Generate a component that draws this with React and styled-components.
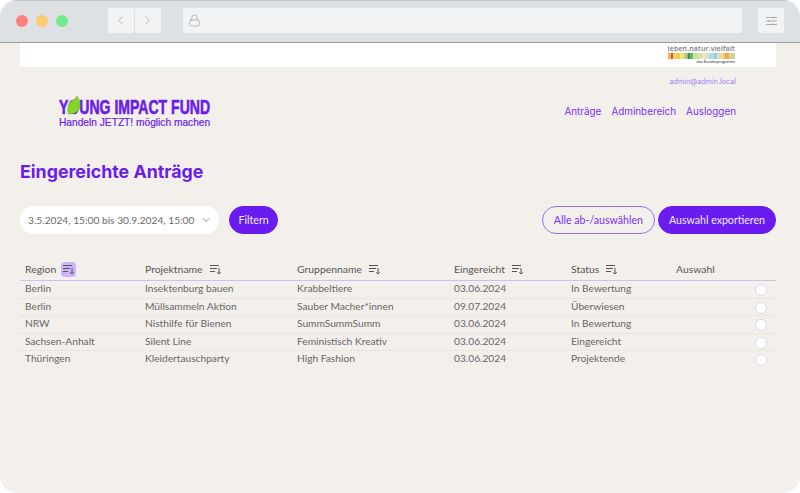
import React from 'react'
import styled, { createGlobalStyle } from 'styled-components'
import { ChevronDown, ChevronLeft, ChevronRight, Lock } from 'lucide-react'

const GlobalStyle = createGlobalStyle`
  html, body { margin: 0; padding: 0; background: #fff; }
  * { box-sizing: border-box; }
`

const Browser = styled.div`
  width: 800px;
  height: 493px;
  background: #f3f0ec;
  border-radius: 17px;
  overflow: hidden;
  font-family: "Lato", sans-serif;
`

const Chrome = styled.div`
  height: 43px;
  background: #dee1e4;
  border-top: 1px solid #c6c8cc;
  border-bottom: 1px solid #9a9a9c;
  display: flex;
  align-items: center;
  padding: 0 15px 2px 16px;
`

const Lights = styled.div`
  display: flex;
  gap: 8px;
  margin-right: 40px;
`

const Light = styled.span`
  width: 12px;
  height: 12px;
  border-radius: 50%;
  background: ${(p) => p.$color};
`

const ToolButton = styled.div`
  width: 26px;
  height: 25px;
  margin-right: 1px;
  background: #f2f3f5;
  border-radius: 2px;
  color: #a9abae;
  display: flex;
  align-items: center;
  justify-content: center;
`

const AddressBar = styled.div`
  width: 560px;
  height: 25px;
  margin: 0 16px 0 21px;
  background: #f2f3f5;
  border-radius: 2px;
  color: #a9abae;
  display: flex;
  align-items: center;
  padding-left: 5px;
`

const Page = styled.div`
  padding: 0 24px 0 20px;
`

const Banner = styled.div`
  height: 24px;
  background: #fff;
  display: flex;
  justify-content: flex-end;
  padding: 2px 41px 0 0;
`

const Programme = styled.div`
  width: 67px;
  display: flex;
  flex-direction: column;
  align-items: flex-end;
`

const ProgrammeName = styled.span`
  font-family: "Open Sans", sans-serif;
  font-size: 6.9px;
  font-weight: 600;
  line-height: 7px;
  letter-spacing: 0.2px;
  color: #77797b;
  white-space: nowrap;
`

const Stripes = styled.div`
  width: 67px;
  height: 6px;
  margin-top: 1px;
  display: flex;
`

const Stripe = styled.span`
  flex: ${(p) => p.$w} 0 0;
  background: ${(p) => p.$color};
`

const ProgrammeSub = styled.span`
  font-family: "Open Sans", sans-serif;
  font-size: 3.6px;
  font-weight: 600;
  line-height: 6px;
  color: #555;
  white-space: nowrap;
`

const Header = styled.header`
  height: 93px;
  padding: 10px 40px 0 39px;
`

const UserMail = styled.div`
  font-family: "Inter", sans-serif;
  font-size: 7.2px;
  line-height: 10px;
  color: #a47cf3;
  text-align: right;
`

const HeaderRow = styled.div`
  display: flex;
  justify-content: space-between;
  margin-top: 5px;
`

const Logo = styled.div`
  display: flex;
  flex-direction: column;
  width: 152px;
  padding-top: 6px;
`

const LogoTitle = styled.div`
  position: relative;
  height: 19px;
`

const LogoText = styled.span`
  display: block;
  font-family: "Liberation Sans", sans-serif;
  font-size: 19.5px;
  font-weight: 700;
  line-height: 19px;
  color: #6a1cf0;
  -webkit-text-stroke: 0.6px #6a1cf0;
  white-space: nowrap;
  transform: scaleX(0.72);
  transform-origin: left center;
`

const Leaf = styled.svg`
  position: absolute;
  left: 8px;
  top: -2px;
`

const LogoClaim = styled.div`
  font-family: "Liberation Sans", sans-serif;
  font-size: 10.2px;
  line-height: 12px;
  color: #6a1cf0;
  -webkit-text-stroke: 0.2px #6a1cf0;
  white-space: nowrap;
`

const Nav = styled.nav`
  display: flex;
  gap: 10px;
  padding-top: 13px;
`

const NavLink = styled.a`
  font-family: "Inter", sans-serif;
  font-size: 9.9px;
  line-height: 13px;
  color: #7a2ff2;
`

const Title = styled.h1`
  margin: 0 0 22px;
  font-family: "Inter", sans-serif;
  font-size: 17.8px;
  font-weight: 700;
  line-height: 24px;
  color: #6a1cf0;
`

const Toolbar = styled.div`
  display: flex;
  align-items: center;
  height: 28px;
`

const DateSelect = styled.div`
  width: 199px;
  height: 28px;
  border-radius: 14px;
  background: #fff;
  display: flex;
  align-items: center;
  justify-content: space-between;
  padding: 0 7px 0 8px;
  font-size: 10.2px;
  color: #6a6a6a;
  white-space: nowrap;
  margin-right: 10px;
`

const Pill = styled.button`
  height: 28px;
  padding: 0 ${(p) => p.$pad}px;
  border-radius: 14px;
  font-family: "Lato", sans-serif;
  font-size: 10.6px;
  line-height: 12px;
  white-space: nowrap;
  background: ${(p) => (p.$outline ? 'transparent' : '#6a1cf0')};
  color: ${(p) => (p.$outline ? '#7a2ff2' : '#f1ebfd')};
  border: 1px solid ${(p) => (p.$outline ? '#9b6cf5' : '#6a1cf0')};
`

const ToolbarRight = styled.div`
  margin-left: auto;
  display: flex;
  gap: 3px;
`

const columns = '120px 152px 157px 117px 105px 1fr'

const HeadRow = styled.div`
  display: grid;
  grid-template-columns: ${columns};
  align-items: center;
  height: 21px;
  margin-top: 26px;
  padding: 0 0 2px 5px;
  border-bottom: 1px solid #d0bdf7;
  font-size: 10.4px;
  color: #555;
`

const HeadCell = styled.div`
  display: flex;
  align-items: center;
  gap: 5px;
  height: 17px;
  white-space: nowrap;
`

const SortBadge = styled.span`
  width: 15px;
  height: 15px;
  border-radius: 4px;
  display: flex;
  align-items: center;
  justify-content: center;
  background: ${(p) => (p.$active ? '#cdb4f8' : 'transparent')};
  color: #55555a;
`

const Row = styled.div`
  display: grid;
  grid-template-columns: ${columns};
  align-items: center;
  height: 17.5px;
  padding-left: 5px;
  font-size: 10.2px;
  color: #666;
  border-bottom: 1px dotted ${(p) => (p.$last ? 'transparent' : '#e0dcd8')};
`

const Cell = styled.div`
  white-space: nowrap;
  padding-bottom: 2px;
`

const RadioCell = styled.div`
  display: flex;
  justify-content: flex-end;
  padding-right: 9px;
`

const Radio = styled.span`
  width: 12px;
  height: 12px;
  margin-top: 2px;
  border-radius: 50%;
  background: #fff;
  border: 1px solid #dcd6ee;
`

const SortIcon = () => (
  <svg width="13" height="11" viewBox="0 0 13 11" fill="none" stroke="currentColor" strokeWidth="1">
    <path d="M1 1.5h9M1 4.5h7M1 7.5h5" />
    <path d="M10 4v6M8.2 8.3 10 10l1.8-1.7" />
  </svg>
)

const stripes = [
  ['#f6b04f', 3], ['#e8503f', 2], ['#f9d25a', 4], ['#f6c843', 3], ['#f3e27e', 3], ['#e0dd8c', 3],
  ['#9ec96e', 3], ['#2f9a58', 2], ['#6cba6b', 3], ['#cfe0a0', 5], ['#d8e2a8', 4], ['#e3e8b8', 4],
  ['#d7e4c8', 3], ['#a7dcec', 5], ['#8ecfe8', 3], ['#c9e4e4', 3], ['#f7d98a', 4], ['#f4c868', 2],
  ['#e7a95e', 4], ['#e9cf8c', 2], ['#c9d88a', 4],
]

const rows = [
  ['Berlin', 'Insektenburg bauen', 'Krabbeltiere', '03.06.2024', 'In Bewertung'],
  ['Berlin', 'Müllsammeln Aktion', 'Sauber Macher*innen', '09.07.2024', 'Überwiesen'],
  ['NRW', 'Nisthilfe für Bienen', 'SummSummSumm', '03.06.2024', 'In Bewertung'],
  ['Sachsen-Anhalt', 'Silent Line', 'Feministisch Kreativ', '03.06.2024', 'Eingereicht'],
  ['Thüringen', 'Kleidertauschparty', 'High Fashion', '03.06.2024', 'Projektende'],
]

const heads = ['Region', 'Projektname', 'Gruppenname', 'Eingereicht', 'Status']

export default function App() {
  return (
    <Browser>
      <GlobalStyle />
      <Chrome>
        <Lights>
          <Light $color="#fe7f7f" />
          <Light $color="#fecb6e" />
          <Light $color="#74ec8d" />
        </Lights>
        <ToolButton><ChevronLeft size={15} strokeWidth={1.4} /></ToolButton>
        <ToolButton><ChevronRight size={15} strokeWidth={1.4} /></ToolButton>
        <AddressBar><Lock size={13} strokeWidth={1.5} /></AddressBar>
        <ToolButton>
          <svg width="13" height="10" viewBox="0 0 13 10" fill="none" stroke="#9a9ca0" strokeWidth="0.8">
            <path d="M1 1.5h11M1 5h11M1 8.5h11" />
            <path d="M8.5 .5v2M4 4v2M8 7.5v2" />
          </svg>
        </ToolButton>
      </Chrome>
      <Page>
        <Banner>
          <Programme>
            <ProgrammeName>leben.natur.vielfalt</ProgrammeName>
            <Stripes>
              {stripes.map(([color, w], i) => <Stripe key={i} $color={color} $w={w} />)}
            </Stripes>
            <ProgrammeSub>das Bundesprogramm</ProgrammeSub>
          </Programme>
        </Banner>
        <Header>
          <UserMail>admin@admin.local</UserMail>
          <HeaderRow>
            <Logo>
              <LogoTitle>
                <LogoText>YOUNG IMPACT FUND</LogoText>
                <Leaf width="14" height="19" viewBox="0 0 14 19">
                  <path d="M10 0C13 4 14 9 12.5 12.5 11 16 6 18.5 1.5 18-.5 13 1 8 4 5.5 6 3.5 9 3 10 0Z" fill="#84d42a" stroke="#5e9c1e" strokeWidth="0.4" />
                </Leaf>
              </LogoTitle>
              <LogoClaim>Handeln JETZT! möglich machen</LogoClaim>
            </Logo>
            <Nav>
              <NavLink>Anträge</NavLink>
              <NavLink>Adminbereich</NavLink>
              <NavLink>Ausloggen</NavLink>
            </Nav>
          </HeaderRow>
        </Header>
        <Title>Eingereichte Anträge</Title>
        <Toolbar>
          <DateSelect>
            3.5.2024, 15:00 bis 30.9.2024, 15:00
            <ChevronDown size={12} strokeWidth={1.5} />
          </DateSelect>
          <Pill $pad={8.5}>Filtern</Pill>
          <ToolbarRight>
            <Pill $outline $pad={11}>Alle ab-/auswählen</Pill>
            <Pill $pad={10}>Auswahl exportieren</Pill>
          </ToolbarRight>
        </Toolbar>
        <HeadRow>
          {heads.map((h, i) => (
            <HeadCell key={h}>
              {h}
              <SortBadge $active={i === 0}><SortIcon /></SortBadge>
            </HeadCell>
          ))}
          <HeadCell>Auswahl</HeadCell>
        </HeadRow>
        {rows.map((r, i) => (
          <Row key={r[1]} $last={i === rows.length - 1}>
            {r.map((c, j) => <Cell key={j}>{c}</Cell>)}
            <RadioCell><Radio /></RadioCell>
          </Row>
        ))}
      </Page>
    </Browser>
  )
}
